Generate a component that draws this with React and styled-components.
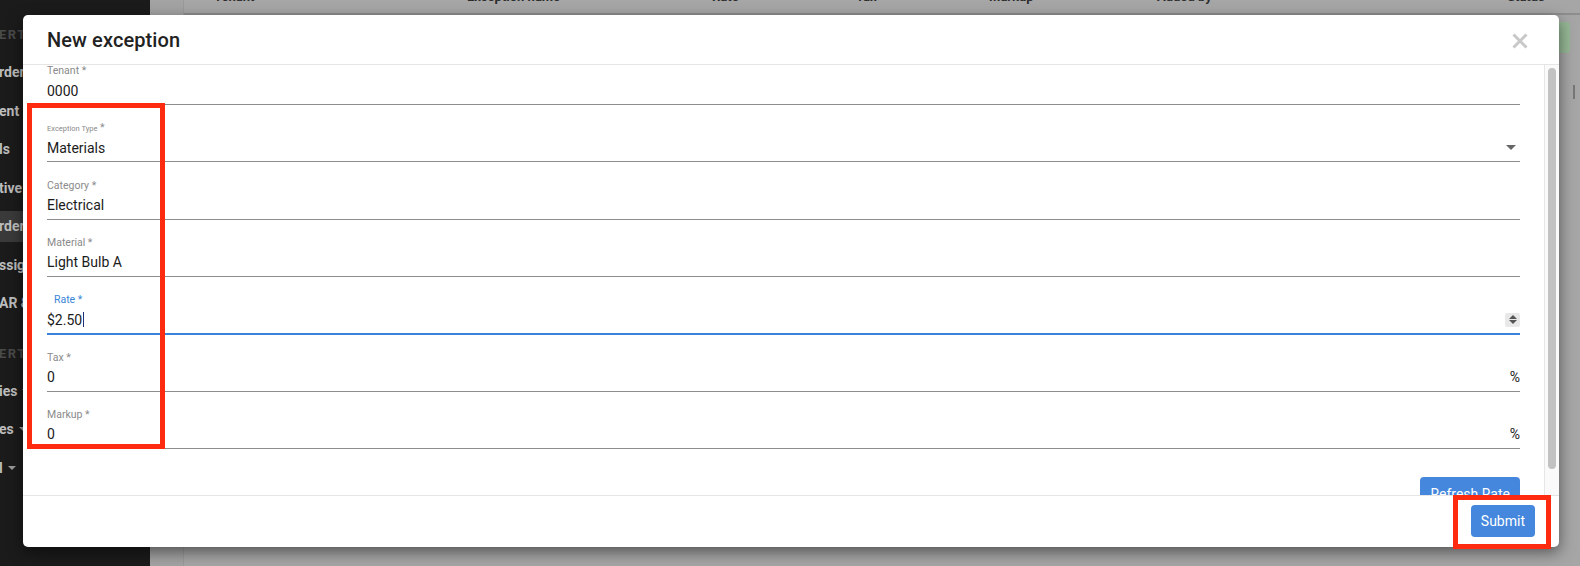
import React from 'react';
import styled, { createGlobalStyle } from 'styled-components';

const GlobalStyle = createGlobalStyle`
  html, body { margin: 0; padding: 0; width: 1580px; height: 566px; overflow: hidden; }
  body { font-family: Roboto, "Helvetica Neue", Arial, sans-serif; }
  *, *::before, *::after { box-sizing: border-box; }
`;

const Page = styled.div`
  position: relative;
  display: flex;
  width: 1580px;
  height: 566px;
  overflow: hidden;
`;

/* ---------- sidebar (behind the modal) ---------- */
const Sidebar = styled.nav`
  width: 150px;
  flex: none;
  background: #1b1b1b;
  display: flex;
  flex-direction: column;
  padding-top: 16px;
`;

const SectionHeader = styled.div`
  height: 37px;
  margin-top: ${(p) => (p.$spaced ? 12 : 0)}px;
  display: flex;
  align-items: center;
  font-size: 13px;
  font-weight: 700;
  letter-spacing: 1.5px;
  color: #4a4a4a;
  margin-left: -1px;
`;

const NavItem = styled.div`
  height: 38.5px;
  display: flex;
  align-items: center;
`;

const NavLink = styled.div`
  flex: 1;
  height: 31px;
  display: flex;
  align-items: center;
  gap: 5px;
  background: ${(p) => (p.$active ? '#3a3a3a' : 'transparent')};
  font-size: 14px;
  font-weight: 700;
  color: #bdbdbd;
  white-space: nowrap;
  overflow: hidden;
  span { margin-left: -1px; }
`;

const Caret = styled.i`
  width: 0;
  height: 0;
  border-left: 4px solid transparent;
  border-right: 4px solid transparent;
  border-top: 4px solid #9a9a9a;
`;

/* ---------- main page (dimmed) ---------- */
const Main = styled.main`
  flex: 1;
  background: #a3a3a3;
  display: flex;
  flex-direction: column;
  padding-left: 33px;
`;

const TablePanel = styled.section`
  border-left: 1px solid #9a9a9a;
  background: #a6a6a6;
  display: flex;
  flex-direction: column;
  flex: 1;
`;

const HeaderRow = styled.div`
  margin-top: -20px;
  height: 35px;
  display: grid;
  grid-template-columns: 253px 245px 144px 133px 168px 350px 1fr;
  align-items: center;
  padding-left: 30px;
  border-bottom: 2px solid #8e8e8e;
  font-size: 13px;
  font-weight: 700;
  color: #2c2c2c;
`;

const Toolbar = styled.div`
  display: flex;
  justify-content: flex-end;
  padding: 7px 10px 0 0;
`;

const GreenButton = styled.div`
  width: 90px;
  height: 31px;
  border-radius: 3px;
  background: #96b896;
`;

const Pager = styled.div`
  display: flex;
  justify-content: flex-end;
  padding: 32px 5px 0 0;
`;

const PagerBar = styled.div`
  width: 2px;
  height: 14px;
  background: #777;
`;

/* ---------- modal ---------- */
const Overlay = styled.div`
  position: absolute;
  inset: 0;
  padding: 15px 21px 19px 23px;
  display: flex;
`;

const Modal = styled.div`
  width: 1536px;
  height: 532px;
  background: #fff;
  border-radius: 5px;
  box-shadow: 0 5px 15px rgba(0, 0, 0, 0.5);
  display: flex;
  flex-direction: column;
  overflow: hidden;
`;

const ModalHeader = styled.header`
  height: 50px;
  flex: none;
  display: flex;
  align-items: center;
  justify-content: space-between;
  padding: 0 31px 0 24px;
  border-bottom: 1px solid #e5e5e5;
`;

const Title = styled.h4`
  margin: 0;
  font-size: 20px;
  font-weight: 500;
  color: #222;
  letter-spacing: 0.1px;
`;

const CloseButton = styled.button`
  border: 0;
  background: none;
  padding: 0;
  margin-top: 3px;
  width: 16px;
  height: 16px;
  display: flex;
  cursor: pointer;
`;

const ModalBody = styled.div`
  flex: 1;
  min-height: 0;
  display: flex;
`;

const BodyContent = styled.div`
  flex: 1;
  min-width: 0;
  overflow: hidden;
  padding: 0 24px;
`;

const ScrollTrack = styled.div`
  width: 15px;
  flex: none;
  background: #fafafa;
  border-left: 1px solid #e6e6e6;
  padding: 3px 3px 0 3px;
`;

const ScrollThumb = styled.div`
  width: 8px;
  height: 401px;
  border-radius: 4px;
  background: #c2c2c2;
`;

const FieldList = styled.div`
  display: flex;
  flex-direction: column;
  gap: 17.33px;
`;

const Field = styled.div`
  display: flex;
  flex-direction: column;
`;

const Label = styled.label`
  display: block;
  height: 12px;
  line-height: 12px;
  font-size: 10.5px;
  padding-left: ${(p) => (p.$focused ? 7 : 0)}px;
  color: ${(p) => (p.$focused ? '#3a85d8' : '#8a8a8a')};
  white-space: nowrap;
`;

const SmallText = styled.span`
  font-size: 7.5px;
`;

const Control = styled.div`
  height: ${(p) => (p.$focused ? 29 : 28)}px;
  display: flex;
  align-items: center;
  justify-content: space-between;
  border-bottom: ${(p) => (p.$focused ? '2px solid #3b82d8' : '1px solid #8d8d8d')};
  margin-bottom: ${(p) => (p.$focused ? -1 : 0)}px;
  font-size: 14px;
  color: #1b1b1b;
`;

const Value = styled.span`
  display: flex;
  align-items: center;
`;

const TextCaret = styled.i`
  display: inline-block;
  width: 1px;
  height: 15px;
  margin-left: 1px;
  background: #1d2f78;
`;

const SelectArrow = styled.i`
  width: 0;
  height: 0;
  margin-right: 4px;
  border-left: 5px solid transparent;
  border-right: 5px solid transparent;
  border-top: 5px solid #666;
`;

const Spinner = styled.span`
  width: 15px;
  height: 14px;
  border-radius: 2px;
  background: #e8e8e8;
  display: flex;
  flex-direction: column;
  align-items: center;
  justify-content: center;
  gap: 1px;
`;

const SpinUp = styled.i`
  width: 0;
  height: 0;
  border-left: 4px solid transparent;
  border-right: 4px solid transparent;
  border-bottom: 4px solid #555;
`;

const SpinDown = styled.i`
  width: 0;
  height: 0;
  border-left: 4px solid transparent;
  border-right: 4px solid transparent;
  border-top: 4px solid #555;
`;

const Suffix = styled.span`
  font-size: 14px;
  color: #222;
`;

const ButtonRow = styled.div`
  display: flex;
  justify-content: flex-end;
  margin-top: 28px;
`;

const PrimaryButton = styled.button`
  height: ${(p) => (p.$tall ? 34 : 32)}px;
  padding: 0 10px;
  border: 0;
  border-radius: 4px;
  background: #4487dc;
  color: #fff;
  font-family: inherit;
  font-size: 14px;
  font-weight: 400;
  cursor: pointer;
`;

const ModalFooter = styled.footer`
  height: 52px;
  flex: none;
  display: flex;
  align-items: center;
  justify-content: flex-end;
  padding: 0 24px 1px 0;
  border-top: 1px solid #e5e5e5;
`;

/* ---------- annotation boxes (drawn over the screenshot) ---------- */
const Annotation = styled.div`
  position: absolute;
  left: ${(p) => p.$x}px;
  top: ${(p) => p.$y}px;
  width: ${(p) => p.$w}px;
  height: ${(p) => p.$h}px;
  border: 5px solid #fe2b10;
  pointer-events: none;
`;

const navTop = [
  { text: 'rders' },
  { text: 'ent' },
  { text: 'ls' },
  { text: 'tive' },
  { text: 'rders', active: true },
  { text: 'ssignments' },
  { text: 'AR & Reports' },
];

const navBottom = [
  { text: 'ies', caret: true },
  { text: 'es', caret: true },
  { text: 'l', caret: true },
];

const fields = [
  { label: 'Tenant *', value: '0000' },
  { label: 'Exception Type', small: true, value: 'Materials', select: true },
  { label: 'Category *', value: 'Electrical' },
  { label: 'Material *', value: 'Light Bulb A' },
  { label: 'Rate *', value: '$2.50', focused: true, spinner: true },
  { label: 'Tax *', value: '0', suffix: '%' },
  { label: 'Markup *', value: '0', suffix: '%' },
];

export default function App() {
  return (
    <>
      <GlobalStyle />
      <Page>
        <Sidebar>
          <SectionHeader>ERTY</SectionHeader>
          {navTop.map((n, i) => (
            <NavItem key={i}>
              <NavLink $active={n.active}><span>{n.text}</span></NavLink>
            </NavItem>
          ))}
          <SectionHeader $spaced>ERTY</SectionHeader>
          {navBottom.map((n, i) => (
            <NavItem key={i}>
              <NavLink><span>{n.text}</span>{n.caret && <Caret />}</NavLink>
            </NavItem>
          ))}
        </Sidebar>
        <Main>
          <TablePanel>
            <HeaderRow>
              <span>Tenant</span>
              <span>Exception name</span>
              <span>Rate</span>
              <span>Tax</span>
              <span>Markup</span>
              <span>Added by</span>
              <span>Status</span>
            </HeaderRow>
            <Toolbar><GreenButton /></Toolbar>
            <Pager><PagerBar /></Pager>
          </TablePanel>
        </Main>

        <Overlay>
          <Modal>
            <ModalHeader>
              <Title>New exception</Title>
              <CloseButton aria-label="Close">
                <svg width="16" height="16" viewBox="0 0 16 16">
                  <path d="M1.5 1.5 L14.5 14.5 M14.5 1.5 L1.5 14.5" stroke="#c8c8c8" strokeWidth="3" fill="none" />
                </svg>
              </CloseButton>
            </ModalHeader>
            <ModalBody>
              <BodyContent>
                <FieldList>
                  {fields.map((f) => (
                    <Field key={f.label}>
                      <Label $focused={f.focused}>
                        {f.small ? (<><SmallText>{f.label}</SmallText> *</>) : f.label}
                      </Label>
                      <Control $focused={f.focused}>
                        <Value>
                          {f.value}
                          {f.focused && <TextCaret />}
                        </Value>
                        {f.select && <SelectArrow />}
                        {f.spinner && (
                          <Spinner><SpinUp /><SpinDown /></Spinner>
                        )}
                        {f.suffix && <Suffix>{f.suffix}</Suffix>}
                      </Control>
                    </Field>
                  ))}
                </FieldList>
                <ButtonRow>
                  <PrimaryButton $tall>Refresh Rate</PrimaryButton>
                </ButtonRow>
              </BodyContent>
              <ScrollTrack>
                <ScrollThumb />
              </ScrollTrack>
            </ModalBody>
            <ModalFooter>
              <PrimaryButton>Submit</PrimaryButton>
            </ModalFooter>
          </Modal>
        </Overlay>

        <Annotation $x={27} $y={103} $w={138} $h={346} />
        <Annotation $x={1453} $y={495} $w={98} $h={54} />
      </Page>
    </>
  );
}
